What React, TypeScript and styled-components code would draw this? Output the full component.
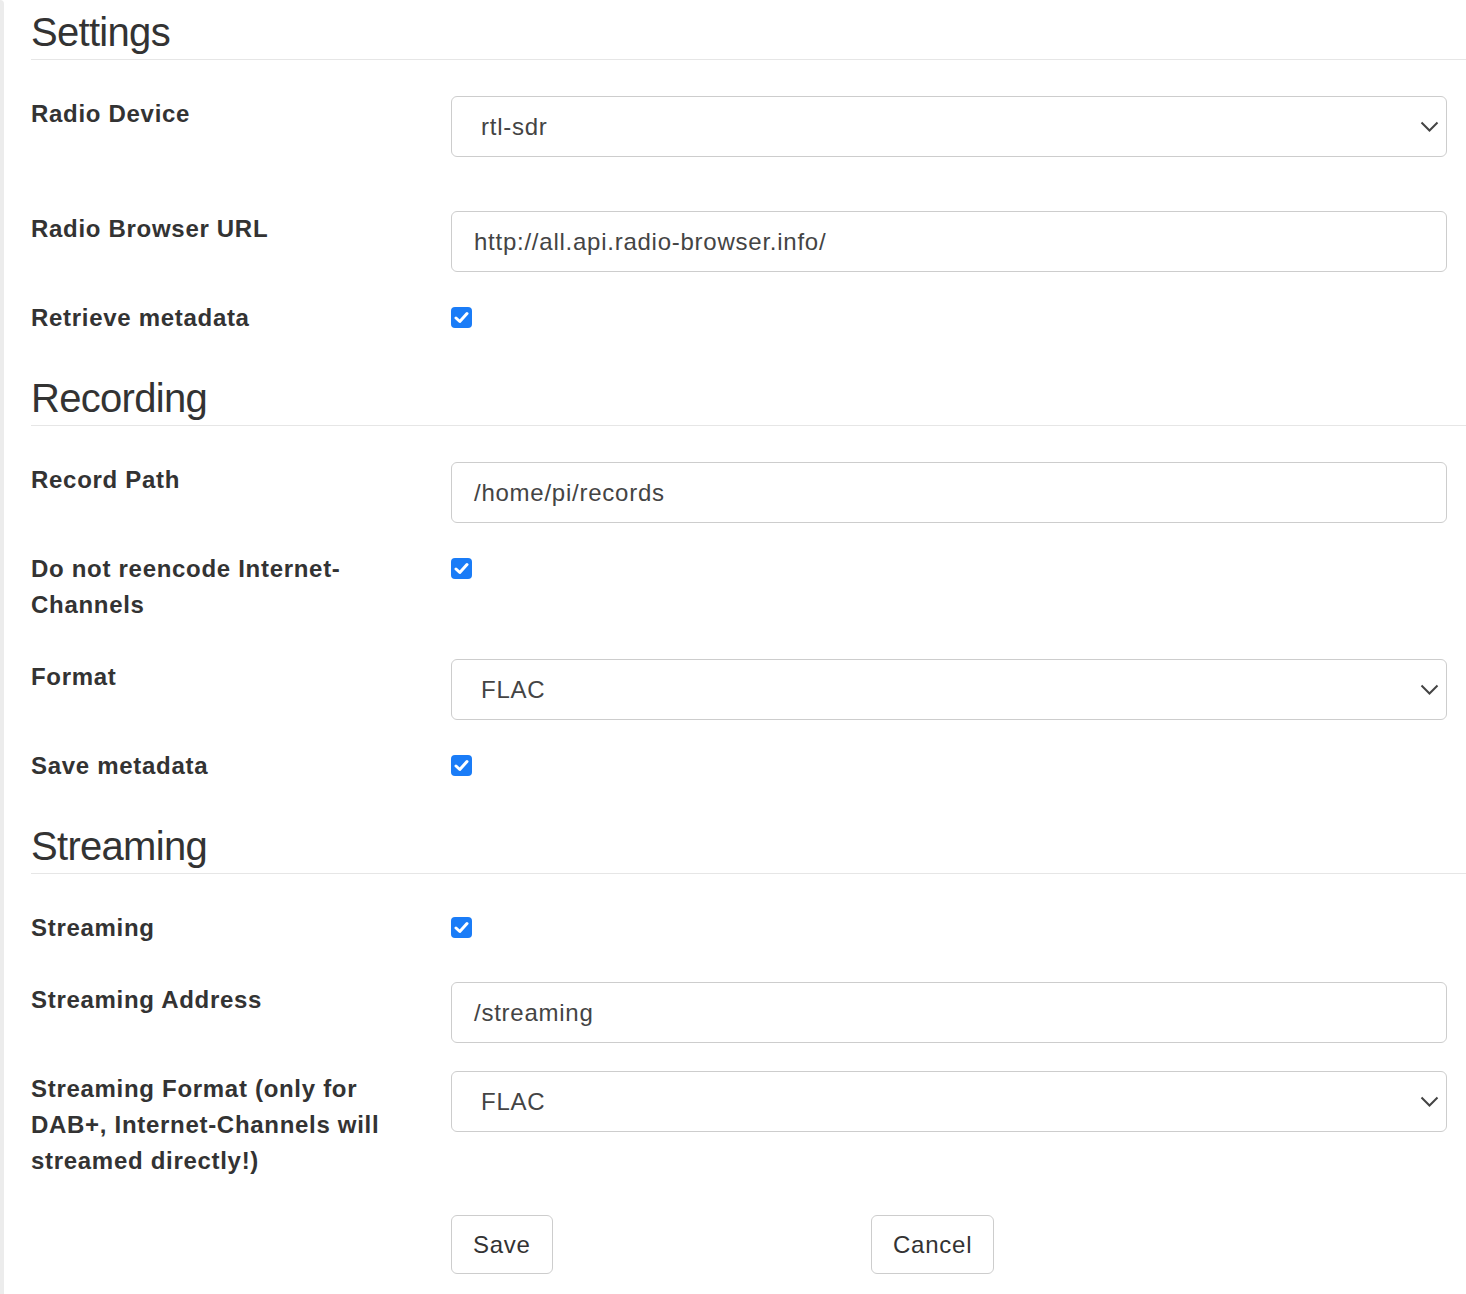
import React from 'react';
import styled, { createGlobalStyle } from 'styled-components';

const GlobalStyle = createGlobalStyle`
	html, body {
		margin: 0;
		padding: 0;
		background: #fff;
	}
	body {
		font-family: 'Liberation Sans', Arial, Helvetica, sans-serif;
		color: #333;
	}
`;

const Page = styled.div`
	display: flex;
	min-height: 1294px;
`;

const SideBar = styled.div`
	width: 4px;
	flex-shrink: 0;
	background: #ececec;
	border-top-right-radius: 4px;
`;

const Main = styled.main`
	flex: 1;
	padding: 6px 0 0 27px;
`;

const SectionTitle = styled.h2`
	margin: 0 0 36px;
	font-size: 40px;
	line-height: 52px;
	letter-spacing: -0.7px;
	font-weight: 400;
	color: #333;
	padding-bottom: 1px;
	border-bottom: 1px solid #e6e6e6;
`;

const FormRow = styled.div<{ $gap?: number }>`
	display: grid;
	grid-template-columns: 420px 996px;
	align-items: start;
	margin-bottom: ${(p) => p.$gap ?? 28}px;
`;

const Label = styled.label`
	font-size: 24px;
	line-height: 36px;
	letter-spacing: 0.7px;
	font-weight: 700;
	color: #333;
	padding-bottom: 8px;
	padding-right: 30px;
`;

const TextInput = styled.div`
	box-sizing: border-box;
	height: 61px;
	border: 1px solid #cdcdcd;
	border-radius: 6px;
	padding: 0 22px;
	display: flex;
	align-items: center;
	font-size: 24px;
	letter-spacing: 0.75px;
	color: #444;
	background: #fff;
`;

const Select = styled(TextInput)`
	padding-left: 29px;
	justify-content: space-between;
	padding-right: 7px;
`;

const CheckBox = styled.span`
	display: inline-flex;
	align-items: center;
	justify-content: center;
	width: 21px;
	height: 21px;
	margin-top: 7px;
	border-radius: 4px;
	background: #1a7cf7;
`;

const ButtonArea = styled.div`
	display: grid;
	grid-template-columns: 420px auto;
	justify-content: start;
`;

const Button = styled.button`
	justify-self: start;
	height: 59px;
	padding: 0 21px;
	font-family: 'Liberation Sans', Arial, sans-serif;
	font-size: 24px;
	letter-spacing: 0.75px;
	color: #333;
	background: #fff;
	border: 1px solid #cdcdcd;
	border-radius: 6px;
`;

const Chevron = () => (
	<svg width="19" height="12" viewBox="0 0 19 12">
		<path d="M1.5 1.5 L9.5 9.5 L17.5 1.5" fill="none" stroke="#444" strokeWidth="2" />
	</svg>
);

const Checked = () => (
	<CheckBox>
		<svg width="15" height="13" viewBox="0 0 15 13">
			<path d="M2 7 L5.8 10.5 L13 2.5" fill="none" stroke="#fff" strokeWidth="3" strokeLinecap="round" strokeLinejoin="round" />
		</svg>
	</CheckBox>
);

const App = () => {
	return (
		<Page>
			<GlobalStyle />
			<SideBar />
			<Main>
				<SectionTitle>Settings</SectionTitle>
				<FormRow $gap={54}>
					<Label>Radio Device</Label>
					<Select>
						rtl-sdr
						<Chevron />
					</Select>
				</FormRow>
				<FormRow>
					<Label>Radio Browser URL</Label>
					<TextInput>http://all.api.radio-browser.info/</TextInput>
				</FormRow>
				<FormRow>
					<Label>Retrieve metadata</Label>
					<div>
						<Checked />
					</div>
				</FormRow>

				<SectionTitle>Recording</SectionTitle>
				<FormRow>
					<Label>Record Path</Label>
					<TextInput>/home/pi/records</TextInput>
				</FormRow>
				<FormRow>
					<Label>Do not reencode Internet-Channels</Label>
					<div>
						<Checked />
					</div>
				</FormRow>
				<FormRow>
					<Label>Format</Label>
					<Select>
						FLAC
						<Chevron />
					</Select>
				</FormRow>
				<FormRow>
					<Label>Save metadata</Label>
					<div>
						<Checked />
					</div>
				</FormRow>

				<SectionTitle>Streaming</SectionTitle>
				<FormRow>
					<Label>Streaming</Label>
					<div>
						<Checked />
					</div>
				</FormRow>
				<FormRow>
					<Label>Streaming Address</Label>
					<TextInput>/streaming</TextInput>
				</FormRow>
				<FormRow>
					<Label>Streaming Format (only for DAB+, Internet-Channels will streamed directly!)</Label>
					<Select>
						FLAC
						<Chevron />
					</Select>
				</FormRow>
				<FormRow>
					<div />
					<ButtonArea>
						<Button>Save</Button>
						<Button>Cancel</Button>
					</ButtonArea>
				</FormRow>
			</Main>
		</Page>
	);
};

export default App;
